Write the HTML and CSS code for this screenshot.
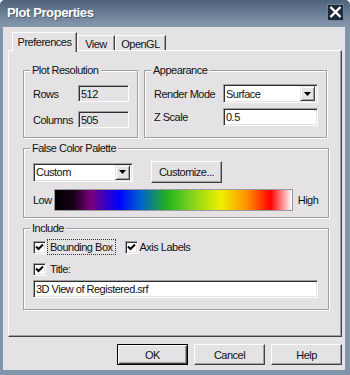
FILE: index.html
```html
<!DOCTYPE html>
<html>
<head>
<meta charset="utf-8">
<link rel="stylesheet" href="styles.css">
</head>
<body>
<div class="window">
  <div class="titlebar">
    <span class="title">Plot Properties</span>
    <span class="close"><svg width="13" height="12" viewBox="0 0 13 12"><path d="M1.5 1 L11.5 11 M11.5 1 L1.5 11" stroke="#fff" stroke-width="2.4" fill="none"/></svg></span>
  </div>
  <div class="client">
    <div class="tabs">
      <div class="tab active">Preferences</div>
      <div class="tab view">View</div>
      <div class="tab opengl">OpenGL</div>
    </div>
    <div class="panel">
      <div class="row1">
        <fieldset class="group res">
          <legend>Plot Resolution</legend>
          <div class="grid res-grid">
            <span class="lbl">Rows</span><span class="field ro">512</span>
            <span class="lbl">Columns</span><span class="field ro">505</span>
          </div>
        </fieldset>
        <fieldset class="group app">
          <legend>Appearance</legend>
          <div class="grid app-grid">
            <span class="lbl">Render Mode</span>
            <span class="field combo w95">Surface<span class="drop"><svg width="7" height="4" viewBox="0 0 7 4"><path d="M0 0 H7 L3.5 4 Z" fill="#000"/></svg></span></span>
            <span class="lbl">Z Scale</span><span class="field zs">0.5</span>
          </div>
        </fieldset>
      </div>
      <fieldset class="group fc">
        <legend>False Color Palette</legend>
        <div class="fc-row">
          <span class="field combo w100">Custom<span class="drop"><svg width="7" height="4" viewBox="0 0 7 4"><path d="M0 0 H7 L3.5 4 Z" fill="#000"/></svg></span></span>
          <span class="btn customize">Customize...</span>
        </div>
        <div class="grad-row">
          <span class="lbl">Low</span>
          <span class="gradient"></span>
          <span class="lbl">High</span>
        </div>
      </fieldset>
      <fieldset class="group inc">
        <legend>Include</legend>
        <div class="chk-row">
          <span class="chk"><svg width="9" height="9" viewBox="0 0 9 9"><path d="M1 3.5 L3.5 6 L8 1.5" stroke="#000" stroke-width="2" fill="none"/></svg></span>
          <span class="chk-lbl focus">Bounding Box</span>
          <span class="chk second"><svg width="9" height="9" viewBox="0 0 9 9"><path d="M1 3.5 L3.5 6 L8 1.5" stroke="#000" stroke-width="2" fill="none"/></svg></span>
          <span class="chk-lbl tight">Axis Labels</span>
        </div>
        <div class="chk-row">
          <span class="chk"><svg width="9" height="9" viewBox="0 0 9 9"><path d="M1 3.5 L3.5 6 L8 1.5" stroke="#000" stroke-width="2" fill="none"/></svg></span>
          <span class="chk-lbl">Title:</span>
        </div>
        <span class="field title-field">3D View of Registered.srf</span>
      </fieldset>
    </div>
    <div class="buttons">
      <span class="btn default">OK</span>
      <span class="btn">Cancel</span>
      <span class="btn">Help</span>
    </div>
  </div>
</div>
</body>
</html>
```
FILE: styles.css
```css
* { box-sizing: border-box; }
html, body { margin: 0; padding: 0; background: #ffffff; }
body {
  font-family: "Liberation Sans", Arial, sans-serif;
  font-size: 11px;
  letter-spacing: -0.5px;
  color: #111;
}
.window {
  width: 350px;
  height: 375px;
  background: #8195aa;
  border-radius: 5px 5px 0 0;
  display: flex;
  flex-direction: column;
  overflow: hidden;
}
.titlebar {
  height: 27px;
  flex: none;
  display: flex;
  align-items: center;
  justify-content: space-between;
  padding: 0 6px 0 7px;
  background: linear-gradient(#4e6279 0%, #677c93 45%, #8799ad 100%);
}
.title {
  color: #fff;
  font-weight: bold;
  font-size: 13px;
  letter-spacing: -0.4px;
  text-shadow: 1px 1px 0 rgba(0,0,0,0.35);
  margin-top: -2px;
}
.close {
  width: 17px;
  height: 17px;
  background: #1e2b38;
  border: 1px solid #6f8296;
  display: flex;
  align-items: center;
  justify-content: center;
  margin-top: -3px;
}
.client {
  flex: 1;
  margin: 0 5px 5px 3px;
  background: #e4e2e4;
  display: flex;
  flex-direction: column;
}
.tabs {
  display: flex;
  align-items: flex-end;
  height: 18px;
  margin: 5px 0 0 9px;
  position: relative;
  z-index: 1;
}
.tab {
  height: 15px;
  border-top: 1px solid #fff;
  border-left: 1px solid #fff;
  border-right: 1px solid #404040;
  box-shadow: inset -1px 0 0 #a0a0a0;
  display: flex;
  align-items: center;
  justify-content: center;
  padding-top: 1px;
  background: #e4e2e4;
}
.tab.active {
  width: 65px;
  height: 20px;
  margin-bottom: -2px;
  padding-bottom: 2px;
}
.tab.view { width: 38px; }
.tab.opengl { width: 51px; }
.panel {
  height: 287px;
  flex: none;
  margin: 0 3px 0 5px;
  border: 1px solid;
  border-color: #fff #404040 #404040 #fff;
  box-shadow: inset -1px -1px 0 #a0a0a0;
  padding: 13px 12px 0 14px;
  display: flex;
  flex-direction: column;
  gap: 4px;
}
.row1 { display: flex; gap: 6px; }
.group {
  margin: 0;
  padding: 0 0 0 9px;
  border: 1px solid #a09ea0;
  box-shadow: 1px 1px 0 #fff, inset 1px 1px 0 #fff;
  min-width: 0;
}
.group legend {
  margin-left: -3px;
  padding: 0 2px;
  line-height: 13px;
  background: #e4e2e4;
}
.res { width: 115px; padding-top: 8px; padding-bottom: 9px; }
.app { width: 183px; padding-top: 7px; }
.grid { display: grid; align-items: center; }
.res-grid { grid-template-columns: 45px 51px; row-gap: 9px; }
.res-grid .field { height: 17px; }
.app-grid { grid-template-columns: 69px 95px; row-gap: 5px; }
.lbl { white-space: nowrap; }
.field {
  display: flex;
  align-items: center;
  padding-left: 2px;
  background: #fff;
  border: 1px solid;
  border-color: #a0a0a0 #fff #fff #a0a0a0;
  box-shadow: inset 1px 1px 0 #303030, inset -1px -1px 0 #e4e2e4;
  white-space: nowrap;
}
.field.ro { background: #e4e2e4; }
.field.zs { height: 18px; }
.combo { height: 19px; justify-content: space-between; padding-right: 2px; }
.w95 { width: 95px; }
.w100 { width: 100px; }
.drop {
  width: 15px;
  height: 15px;
  background: #e4e2e4;
  border: 1px solid;
  border-color: #e4e2e4 #404040 #404040 #e4e2e4;
  box-shadow: inset 1px 1px 0 #fff, inset -1px -1px 0 #a0a0a0;
  display: flex;
  align-items: center;
  justify-content: center;
}
.fc { padding-top: 6px; padding-bottom: 6px; }
.fc-row { display: flex; align-items: center; gap: 18px; }
.btn {
  display: flex;
  align-items: center;
  justify-content: center;
  width: 71px;
  height: 22px;
  background: #e4e2e4;
  border: 1px solid;
  border-color: #fff #404040 #404040 #fff;
  box-shadow: inset -1px -1px 0 #a0a0a0;
}
.grad-row { display: flex; align-items: center; margin-top: 6px; }
.gradient {
  width: 239px;
  height: 22px;
  margin: 0 5px 0 2px;
  border: 1px solid #9a9a9a;
  background: linear-gradient(to right, #000 0%, #1a0018 8%, #7a007a 15%, #3a00c0 21%, #0000ff 27%, #0060d0 36%, #20b020 47%, #70d020 56%, #f0f000 70%, #ff9000 81%, #ff0000 91%, #ffffff 100%);
}
.inc { padding-top: 4px; padding-bottom: 11px; }
.chk-row { display: flex; align-items: center; height: 16px; margin-bottom: 6px; }
.chk {
  width: 13px;
  height: 13px;
  background: #fff;
  border: 1px solid;
  border-color: #a0a0a0 #fff #fff #a0a0a0;
  box-shadow: inset 1px 1px 0 #303030, inset -1px -1px 0 #e4e2e4;
  display: flex;
  align-items: center;
  justify-content: center;
}
.chk.second { margin-left: 10px; }
.chk-lbl { margin-left: 2px; padding: 0 2px; line-height: 14px; }
.chk-lbl.tight { margin-left: 0; }
.chk-lbl.focus { outline: 1px dotted #333; }
.title-field { width: 285px; height: 18px; margin-top: -3px; }
.buttons {
  display: flex;
  justify-content: flex-end;
  gap: 6px;
  margin: 7px 3px 0 0;
}
.buttons .btn { height: 21px; }
.btn.default {
  border: 1px solid #000;
  box-shadow: inset 1px 1px 0 #fff, inset -1px -1px 0 #404040, inset -2px -2px 0 #a0a0a0;
}
```
